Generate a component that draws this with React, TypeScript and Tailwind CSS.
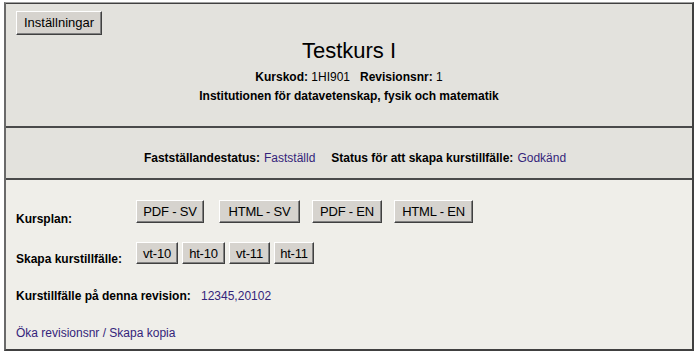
import React from 'react';

const btn =
  'bg-[#d6d3ce] text-black leading-none text-center border border-t-white border-l-white border-r-[#404040] border-b-[#404040] shadow-[inset_-1px_-1px_0_#808080]';

function Btn({ label, w, h }: { label: string; w: string; h: string }) {
  return <button className={`${btn} ${w} ${h} text-[13px] tracking-[-0.2px]`}>{label}</button>;
}

export default function App() {
  return (
    <div className="bg-white w-[697px] h-[353px] pt-[2px] pl-[4px] pr-[3px] pb-[2px] font-['Liberation_Sans',Arial,sans-serif] text-black">
      <div className="h-full border-t border-l-2 border-r-2 border-b-2 border-t-[#a0a0a0] border-l-[#6a6a6a] border-r-[#404040] border-b-[#404040] flex flex-col">
        {/* header */}
        <div className="bg-[#e3e2dd] border-t border-t-[#404040] h-[125px] px-[10px] pt-[6px] border-b-2 border-b-[#4a4a4a]">
          <button className={`${btn} w-[86px] h-[24px] text-[13px]`}>Inställningar</button>
          <h1 className="text-center text-[22px] leading-none mt-[5px]">Testkurs I</h1>
          <p className="text-center text-[12px] mt-[6px]">
            <span className="font-bold">Kurskod:</span> 1HI901&nbsp;&nbsp;&nbsp;
            <span className="font-bold">Revisionsnr:</span> 1
          </p>
          <p className="text-center text-[12px] font-bold mt-[1px]">
            Institutionen för datavetenskap, fysik och matematik
          </p>
        </div>

        {/* status */}
        <div className="bg-[#e3e2dd] h-[52px] flex items-center justify-center text-[12px] border-b-2 border-b-[#4a4a4a] pt-[9px] pl-[12px]">
          <span className="font-bold">Fastställandestatus:</span>
          <span className="text-[#34247a] ml-[4px]">Fastställd</span>
          <span className="font-bold ml-[16px]">Status för att skapa kurstillfälle:</span>
          <span className="text-[#34247a] ml-[4px]">Godkänd</span>
        </div>

        {/* body */}
        <div className="bg-[#efeee9] flex-1 px-[10px] text-[12px]">
          <div className="flex items-end mt-[20px]">
            <span className="font-bold w-[120px]">Kursplan:</span>
            <div className="flex mb-[5px]">
              <Btn label="PDF - SV" w="w-[68px]" h="h-[23px]" />
              <span className="w-[15px]" />
              <Btn label="HTML - SV" w="w-[81px]" h="h-[23px]" />
              <span className="w-[12px]" />
              <Btn label="PDF - EN" w="w-[70px]" h="h-[23px]" />
              <span className="w-[12px]" />
              <Btn label="HTML - EN" w="w-[79px]" h="h-[23px]" />
            </div>
          </div>
          <div className="flex items-end mt-[14px]">
            <span className="font-bold w-[120px]">Skapa kurstillfälle:</span>
            <div className="flex gap-[4px] mb-[4px]">
              <Btn label="vt-10" w="w-[42px]" h="h-[22px]" />
              <Btn label="ht-10" w="w-[43px]" h="h-[22px]" />
              <Btn label="vt-11" w="w-[41px]" h="h-[22px]" />
              <Btn label="ht-11" w="w-[40px]" h="h-[22px]" />
            </div>
          </div>
          <div className="flex mt-[19px]">
            <span className="font-bold w-[185px]">Kurstillfälle på denna revision:</span>
            <span className="text-[#34247a]">12345,20102</span>
          </div>
          <div className="mt-[19px] text-[#34247a]">Öka revisionsnr / Skapa kopia</div>
        </div>
      </div>
    </div>
  );
}
